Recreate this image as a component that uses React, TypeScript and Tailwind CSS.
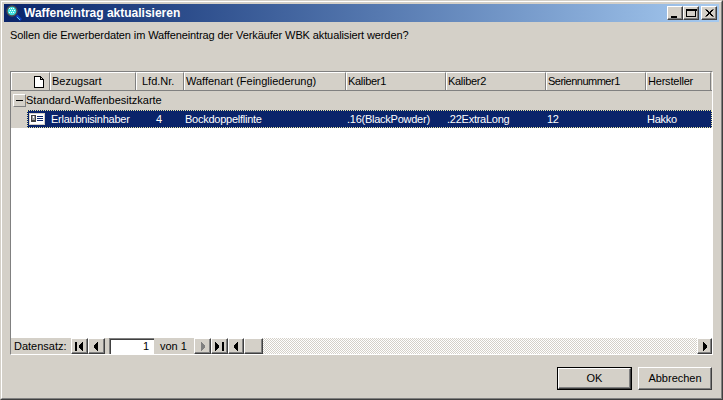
import React from 'react';

const bevel =
  'border border-t-white border-l-white border-b-[#404040] border-r-[#404040] shadow-[inset_-1px_-1px_0_#808080] bg-[#d4d0c8]';

const columns = [
  { label: 'Bezugsart', value: 'Erlaubnisinhaber', width: 'w-[86px]', cls: '', track: '' },
  { label: 'Lfd.Nr.', value: '4', width: 'w-[48px]', cls: 'pl-[20px]', track: 'pl-[4px]' },
  { label: 'Waffenart (Feingliederung)', value: 'Bockdoppelflinte', width: 'w-[162px]', cls: '', track: '' },
  { label: 'Kaliber1', value: '.16(BlackPowder)', width: 'w-[100px]', cls: '', track: 'tracking-[-0.3px]' },
  { label: 'Kaliber2', value: '.22ExtraLong', width: 'w-[100px]', cls: '', track: 'tracking-[-0.3px]' },
  { label: 'Seriennummer1', value: '12', width: 'w-[100px]', cls: '', track: 'tracking-[-0.5px]' },
  { label: 'Hersteller', value: 'Hakko', width: 'w-[65px]', cls: '', track: 'tracking-[-0.2px]' },
];

function SearchIcon() {
  return (
    <svg width="16" height="16" viewBox="0 0 16 16" className="shrink-0">
      <path d="M10.5 10.5l4.5 4.5" stroke="#1040c0" strokeWidth="2.6" />
      <path d="M11 12l3 3" stroke="#60d0f0" strokeWidth="1" />
      <circle cx="6" cy="6" r="5" fill="#40e0e0" stroke="#505050" strokeWidth="1.4" />
      <path d="M3 3h1v1H3zM5 3h1v1H5zM7 3h1v1H7zM4 5h1v1H4zM6 5h1v1H6zM8 5h1v1H8zM3 7h1v1H3zM5 7h1v1H5zM7 7h1v1H7z" fill="#fff" />
    </svg>
  );
}

function CaptionButton({ kind }: { kind: 'min' | 'max' | 'close' }) {
  return (
    <div className={`${bevel} w-4 h-[14px] flex items-center justify-center`}>
      <svg width="14" height="12" viewBox="0 0 14 12" shapeRendering="crispEdges">
        {kind === 'min' && <path d="M3 9h6v2H3z" fill="#000" />}
        {kind === 'max' && <path d="M2.5 2.5h9v7h-9zM2 2h10v1.5H2z" fill="none" stroke="#000" />}
        {kind === 'close' && (
          <path d="M3.5 2.5l7 7M4.5 2.5l7 7M10.5 2.5l-7 7M11.5 2.5l-7 7" stroke="#000" fill="none" shapeRendering="auto" />
        )}
      </svg>
    </div>
  );
}

function NavButton({ path, disabled, w = 'w-[17px]' }: { path?: string; disabled?: boolean; w?: string }) {
  return (
    <div className={`${bevel} ${w} h-4 flex items-center justify-center shrink-0`}>
      {path && (
        <svg width="11" height="9" viewBox="0 0 11 9" shapeRendering="crispEdges">
          <path d={path} fill={disabled ? '#808080' : '#000'} />
        </svg>
      )}
    </div>
  );
}

const firstIcon = 'M1 0h2v9H1zM8 0h1v9H8zM7 1h1v7H7zM6 2h1v5H6zM5 3h1v3H5z';
const prevIcon = 'M6 0h1v9H6zM5 1h1v7H5zM4 2h1v5H4zM3 3h1v3H3z';
const nextIcon = 'M4 0h1v9H4zM5 1h1v7H5zM6 2h1v5H6zM7 3h1v3H7z';
const lastIcon = 'M8 0h2v9H8zM1 0h1v9H1zM2 1h1v7H2zM3 2h1v5H3zM4 3h1v3H4z';

export default function App() {
  return (
    <div
      className="w-[723px] h-[400px] overflow-hidden bg-[#d4d0c8] text-[11px] leading-[13px] text-black border border-t-[#d4d0c8] border-l-[#d4d0c8] border-b-[#404040] border-r-[#404040]"
      style={{ fontFamily: '"Liberation Sans", Arial, sans-serif' }}
    >
      <div className="h-full border border-t-white border-l-white border-b-[#808080] border-r-[#808080] p-[2px] flex flex-col">
        {/* title bar */}
        <div className="h-[18px] shrink-0 flex items-center bg-gradient-to-r from-[#0a246a] to-[#a6caf0] pl-[2px] pr-[2px]">
          <SearchIcon />
          <span className="ml-[2px] font-bold text-white text-[12px]">Waffeneintrag aktualisieren</span>
          <div className="ml-auto flex">
            <CaptionButton kind="min" />
            <CaptionButton kind="max" />
            <div className="w-[2px]" />
            <CaptionButton kind="close" />
          </div>
        </div>

        <p className="mt-[7px] ml-[6px] h-[13px] tracking-[-0.11px]">Sollen die Erwerberdaten im Waffeneintrag der Verkäufer WBK aktualisiert werden?</p>

        {/* grid */}
        <div className="mt-[29px] ml-[6px] w-[703px] h-[284px] flex flex-col border border-t-[#808080] border-l-[#808080] border-b-white border-r-white">
          <div className="flex h-[19px] shrink-0 border-b border-b-[#808080]">
            <div className="w-[39px] flex items-center justify-end pr-[5px] border-t border-l border-t-white border-l-white border-r border-r-[#808080]">
              <svg width="10" height="12" viewBox="0 0 10 12" shapeRendering="crispEdges">
                <path d="M0.5 0.5h6l3 3v8h-9zM6.5 0.5v3h3" fill="#fff" stroke="#000" />
              </svg>
            </div>
            {columns.map((c) => (
              <div
                key={c.label}
                className={`${c.width} flex items-center pl-[1px] border-t border-l border-t-white border-l-white border-r border-r-[#808080] whitespace-nowrap overflow-hidden`}
              >
                <span className={c.track}>{c.label}</span>
              </div>
            ))}
          </div>

          <div className="h-[19px] shrink-0 flex items-center pl-[2px]">
            <div className="w-[13px] h-[13px] flex items-center justify-center bg-[#d4d0c8] border border-t-white border-l-white border-b-[#808080] border-r-[#808080]">
              <div className="w-[7px] h-px bg-black" />
            </div>
            <span>Standard-Waffenbesitzkarte</span>
          </div>

          <div className="h-[18px] shrink-0 pl-4 flex">
            <div className="flex-1 flex items-center bg-[#0a246a] text-white border border-dotted border-[#e8e4a0] whitespace-nowrap tracking-[-0.25px]">
              <div className="w-[22px] shrink-0 flex justify-start pl-px">
                <svg width="16" height="12" viewBox="0 0 16 12" shapeRendering="crispEdges">
                  <path d="M0 0h16v12H0z" fill="#d4d0c8" />
                  <path d="M1 1h14v10H1z" fill="#fff" />
                  <path d="M2 2h5v7H2z" fill="#404040" />
                  <path d="M3 3h3v4H3z" fill="#a0a0a0" />
                  <path d="M4 3h1v2H4z" fill="#fff" />
                  <path d="M8 3h6v1H8zM8 5h6v1H8zM8 7h6v1H8z" fill="#0a246a" />
                </svg>
              </div>
              {columns.map((c) => (
                <div key={c.label} className={`${c.width} shrink-0 ${c.cls} pl-[1px]`}>
                  {c.value}
                </div>
              ))}
            </div>
          </div>

          <div className="flex-1 bg-white" />

          {/* record navigator + horizontal scroll */}
          <div className="h-4 shrink-0 flex items-center">
            <span className="ml-[3px] w-[57px]">Datensatz:</span>
            <NavButton path={firstIcon} />
            <NavButton path={prevIcon} />
            <div className="ml-1 w-[45px] h-4 bg-white text-right pr-[5px] leading-[15px] border-t border-l border-t-[#808080] border-l-[#808080] shadow-[inset_1px_1px_0_#404040]">
              1
            </div>
            <span className="ml-[6px] w-[34px]">von 1</span>
            <NavButton path={nextIcon} disabled />
            <NavButton path={lastIcon} />
            <NavButton path={prevIcon} w="w-4" />
            <NavButton w="w-[19px]" />
            <div className="flex-1 h-full bg-[repeating-conic-gradient(#d4d0c8_0_25%,#ffffff_0_50%)] bg-[length:2px_2px]" />
            <NavButton path={nextIcon} w="w-[15px]" />
          </div>
        </div>

        {/* buttons */}
        <div className="mt-[12px] mr-[7px] flex justify-end gap-[6px]">
          <div className="border border-black">
            <div className={`${bevel} w-[73px] h-[21px] flex items-center justify-center`}>OK</div>
          </div>
          <div className={`${bevel} w-[74px] h-[23px] flex items-center justify-center`}>Abbrechen</div>
        </div>
      </div>
    </div>
  );
}
